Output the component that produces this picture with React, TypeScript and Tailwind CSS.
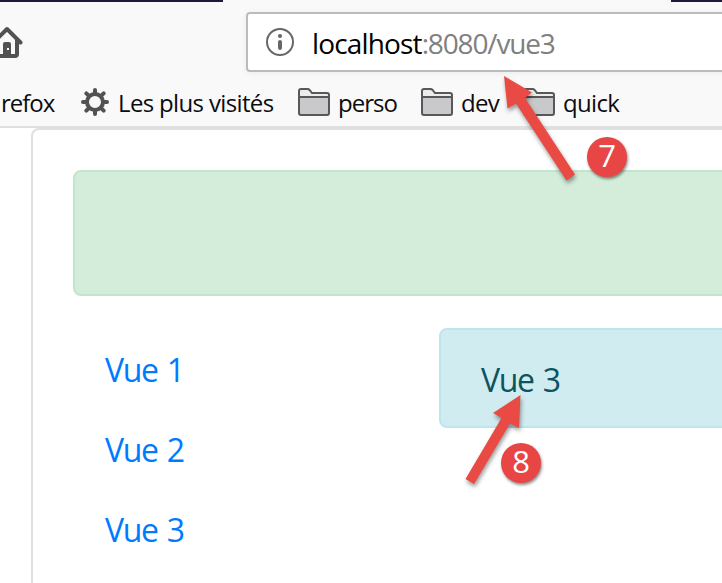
function HomeIcon() {
  return (
    <svg className="h-8 w-8 shrink-0" viewBox="0 0 32 32" fill="none">
      <path d="M2.500 16.500 16 3 29.500 16.500" stroke="#525254" strokeWidth="4" strokeLinecap="round" strokeLinejoin="round" />
      <path d="M6 14v14a2 2 0 0 0 2 2h16a2 2 0 0 0 2-2V13" stroke="#525254" strokeWidth="4" />
      <path d="M12 30V18a2 2 0 0 1 2-2h4a2 2 0 0 1 2 2v12z" fill="#525254" />
      <rect x="16" y="22" width="2" height="2" fill="#f9f9fa" />
    </svg>
  );
}

function GearIcon() {
  return (
    <svg className="h-7 w-7 shrink-0" viewBox="-14 -14 28 28" fill="none" stroke="#525254" strokeLinecap="round">
      <circle r="8" strokeWidth="4" />
      <path
        strokeWidth="4"
        d="M0-9.5V-12M0 9.5V12M-9.500 0H-12M9.500 0H12M6.800-6.800 8.700-8.700M-6.800-6.800-8.700-8.700M6.800 6.800 8.700 8.700M-6.800 6.800-8.700 8.700"
      />
    </svg>
  );
}

function FolderIcon() {
  return (
    <svg className="h-7 w-8 shrink-0" viewBox="0 0 32 28" fill="none">
      <path
        d="M1 25V3a2 2 0 0 1 2-2h6.500c1 0 1.500.3 2.100 1L14 5h15a2 2 0 0 1 2 2v18a2 2 0 0 1-2 2H3a2 2 0 0 1-2-2z"
        fill="#ececed"
      />
      <path d="M1 9h30v16a2 2 0 0 1-2 2H3a2 2 0 0 1-2-2z" fill="#c9c9cb" />
      <path
        d="M1 25V3a2 2 0 0 1 2-2h6.500c1 0 1.500.3 2.100 1L14 5h15a2 2 0 0 1 2 2v18a2 2 0 0 1-2 2H3a2 2 0 0 1-2-2zM1 9h30"
        stroke="#58585a"
        strokeWidth="2"
      />
    </svg>
  );
}

function InfoIcon() {
  return (
    <svg className="h-7 w-7 shrink-0" viewBox="0 0 28 28" fill="none">
      <circle cx="14" cy="14" r="13" stroke="#676767" strokeWidth="2" />
      <circle cx="14" cy="8" r="2.100" fill="#676767" />
      <path d="M14 14v6" stroke="#676767" strokeWidth="4" strokeLinecap="round" />
    </svg>
  );
}

function Badge({ value }: { value: string }) {
  return (
    <div className="flex size-10 items-center justify-center rounded-full bg-[#e84545] pb-[3px] font-['Open_Sans',sans-serif] text-[31px] font-medium leading-none text-white shadow-[1px_2px_3px_rgba(0,0,0,0.45)]">
      {value}
    </div>
  );
}

const links = ["Vue 1", "Vue 2", "Vue 3"];

export default function App() {
  return (
    <div className="relative flex h-[583px] w-[722px] flex-col overflow-hidden bg-white font-['Open_Sans',sans-serif]">
      <header className="h-32 shrink-0 border-b-2 border-[#e0e0e0] bg-[#f9f9fa]">
        <div className="flex h-0.5 justify-between">
          <div className="w-[223px] bg-[#1d1b3b]" />
          <div className="w-[51px] bg-[#1d1b3b]" />
        </div>
        <div className="flex h-[70px] items-start pt-2.5">
          <div className="-ml-[9px] mt-[14px]">
            <HomeIcon />
          </div>
          <div className="ml-[223px] flex h-[60px] w-[500px] shrink-0 items-center rounded border-2 border-[#bbbbbb] bg-white pl-[18px] shadow-[0_1px_6px_rgba(0,0,0,0.06)]">
            <InfoIcon />
            <span className="ml-[18px] whitespace-nowrap pt-0.5 text-[28px] leading-none tracking-[-1.15px] text-[#808080]">
              <span className="tracking-[-0.85px] text-black">localhost</span>:8080/vue3
            </span>
          </div>
        </div>
        <div className="flex h-[54px] items-start whitespace-nowrap pt-4 text-2xl leading-[30px] tracking-[-0.65px] text-[#0c0c0d]">
          <span className="w-[81px] pl-px tracking-[-1px]">refox</span>
          <GearIcon />
          <span className="w-[189px] pl-[9px]">Les plus visités</span>
          <FolderIcon />
          <span className="w-[91px] pl-2 tracking-[-1px]">perso</span>
          <FolderIcon />
          <span className="w-[70px] pl-2">dev</span>
          <FolderIcon />
          <span className="pl-2">quick</span>
        </div>
      </header>
      <main className="ml-[31px] h-[500px] w-[720px] shrink-0 rounded-tl-lg border-2 border-[#e0e0e0] px-10 pt-10">
        <div className="h-[126px] w-[700px] rounded-lg border-2 border-[#c3e6cb] bg-[#d4edda]" />
        <div className="mt-8 flex items-start text-[32px] leading-[48px]">
          <nav className="w-[366px] shrink-0">
            {links.map((label) => (
              <a key={label} className="block px-8 pb-3.5 pt-[18px] tracking-[-1.3px] [word-spacing:2px] text-[#007bff]">
                {label}
              </a>
            ))}
          </nav>
          <div className="h-[100px] w-[400px] shrink-0 rounded-lg border-2 border-[#bee5eb] bg-[#d1ecf1] px-10 pb-[22px] pt-[26px] tracking-[-1.3px] [word-spacing:2px] text-[#0c5460]">
            Vue 3
          </div>
        </div>
      </main>
      <svg className="absolute inset-0 h-[583px] w-[722px] drop-shadow-[1px_3px_2px_rgba(0,0,0,0.4)]" viewBox="0 0 722 583" fill="#e94a43">
        <path d="M504 76 532 92.500 525 98 575 174.500 566.500 180.500 516 103.500 507.500 108.500Z" />
        <path d="M520.500 395 519 428 510 423.500 474 484 465.500 479 501.500 418 493 413Z" />
      </svg>
      <div className="absolute left-[587px] top-[137px]">
        <Badge value="7" />
      </div>
      <div className="absolute left-[501px] top-[443px]">
        <Badge value="8" />
      </div>
    </div>
  );
}
